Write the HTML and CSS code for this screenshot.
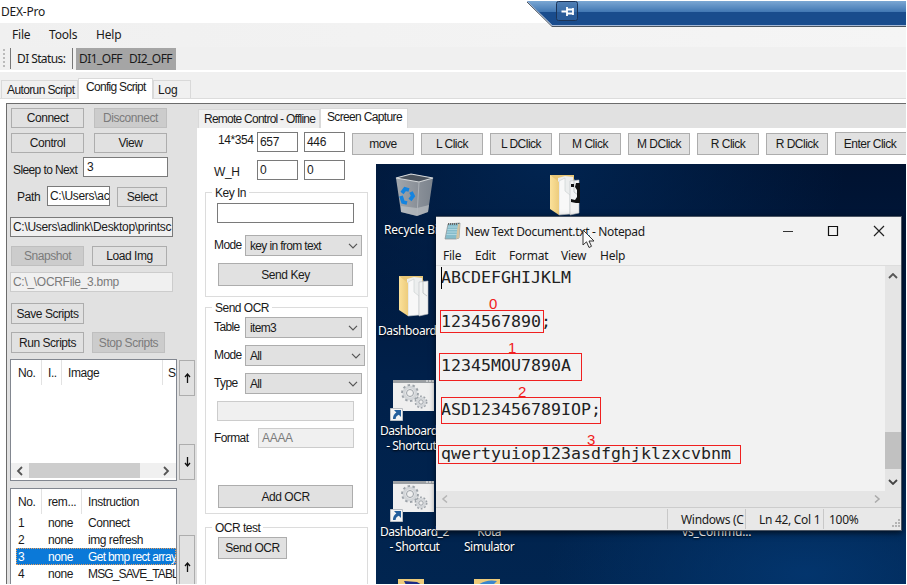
FILE: index.html
```html
<!DOCTYPE html>
<html lang="en">
<head>
<meta charset="utf-8">
<title>DEX-Pro</title>
<link rel="stylesheet" href="styles.css">
</head>
<body>
<svg class="defs" width="0" height="0">
  <defs>
    <linearGradient id="folderFill" x1="0" x2="1"><stop offset="0" stop-color="#fbe19a"/><stop offset="1" stop-color="#edcc7c"/></linearGradient>
    <linearGradient id="binFill" x1="0" x2="1"><stop offset="0" stop-color="#a2a7ad"/><stop offset=".55" stop-color="#8b9199"/><stop offset="1" stop-color="#7b838d"/></linearGradient>
    <symbol id="folder" viewBox="0 0 32 44">
      <path d="M1 2h24v32l-16 4-8-3z" fill="#e8c676"/>
      <path d="M9 5l7-2 8 1v34l-15 3z" fill="#eceeee"/>
      <path d="M10 8l6-3v13l5 4v19l-11 1z" fill="#f8f8f8" stroke="#c8cccc" stroke-width=".6"/>
      <path d="M21 8l9-1v33l-9 2z" fill="#f2f3f3" stroke="#bcc0c2" stroke-width=".6"/>
      <path d="M25 6v13l4 3" fill="none" stroke="#b7bbbd" stroke-width=".8"/>
      <path d="M1 2l9 7v33l-9-6z" fill="url(#folderFill)"/>
    </symbol>
    <symbol id="shortcut" viewBox="0 0 44 42">
      <path d="M3 1h41v31H3z" fill="#efefef"/>
      <path d="M3 1h41v3H3z" fill="#9ca0a4"/>
      <path d="M36 2h2M39 2h2M42 2h2" stroke="#f5f5f5"/>
      <g fill="none" stroke="#9ca2a8">
        <circle cx="20" cy="14" r="6" stroke-width="3" stroke="#d3d6d9"/>
        <circle cx="20" cy="14" r="8" stroke-width="1.800" stroke-dasharray="2.500 2.500"/>
        <circle cx="20" cy="14" r="3.500"/>
        <circle cx="31" cy="23" r="4" stroke-width="2.500" stroke="#d3d6d9"/>
        <circle cx="31" cy="23" r="5.700" stroke-width="1.500" stroke-dasharray="1.800 1.800"/>
        <circle cx="31" cy="23" r="2.200"/>
      </g>
      <path d="M.5 29.500h12v12H.5z" fill="#f4f4f4" stroke="#b9bdc2"/>
      <path d="M4 31h7v7l-2.200-2.200C7 36.500 5.800 38 5.600 40H3c-.3-3 1.500-5.500 3.400-6.600z" fill="#245f9c"/>
    </symbol>
    <symbol id="chev" viewBox="0 0 10 6"><path d="M1 .8l4 4 4-4" fill="none" stroke="currentColor" stroke-width="1.200"/></symbol>
    <symbol id="arrowUp" viewBox="0 0 7 10"><path d="M3.500 1v9M1 4l2.500-3L6 4" fill="none" stroke="#111" stroke-width="1.300"/></symbol>
  </defs>
</svg>

<div class="app">
  <header class="titlebar"><span>DEX-Pro</span></header>
  <div class="session-bar">
    <svg width="379" height="28" viewBox="0 0 379 28">
      <defs><linearGradient id="bar" x1="0" x2="0" y1="0" y2="1"><stop offset="0" stop-color="#7ba7d3"/><stop offset="1" stop-color="#4177b3"/></linearGradient></defs>
      <path d="M0 1h379v25H26z" fill="#194c8d"/>
      <path d="M0 1h379v11H11z" fill="url(#bar)"/>
      <path d="M0 1l25 24.500h354" fill="none" stroke="#a4b8d6"/>
      <path d="M0 2l25 24.500h354" fill="none" stroke="#4b5560"/>
      <rect x="29.500" y="1.500" width="21" height="19" rx="2" fill="#3565a0" fill-opacity=".6" stroke="#1c3457"/>
      <path d="M34.500 11.500h5M40 7v9M40 9.500h6M40 13.500h6M46 8v7" stroke="#fff" stroke-width="1.800" fill="none"/>
    </svg>
  </div>
  <nav class="menubar ui"><span>File</span><span>Tools</span><span>Help</span></nav>
  <div class="toolstrip ui">
    <i class="grip"></i><i class="sep"></i><span class="di-label">DI Status:</span><i class="sep"></i>
    <span class="di"><b>DI1_OFF</b><b>DI2_OFF</b></span>
  </div>
  <div class="tabs outer">
    <span class="tab t-auto">Autorun Script</span><span class="tab active t-config">Config Script</span><span class="tab t-log">Log</span>
  </div>
  <main class="page">
    <aside class="side">
      <div class="row r-connect"><button class="w73">Connect</button><button class="w73 off">Disconnect</button></div>
      <div class="row r-control"><button class="w73">Control</button><button class="w73">View</button></div>
      <div class="row r-sleep"><label>Sleep to Next</label><div class="field">3</div></div>
      <div class="row r-path"><label>Path</label><div class="field">C:\Users\ac</div><button>Select</button></div>
      <div class="field wide ro">C:\Users\adlink\Desktop\printsc</div>
      <div class="row r-snap"><button class="w73 off">Snapshot</button><button class="w75">Load Img</button></div>
      <div class="field wide dis">C:\_\OCRFile_3.bmp</div>
      <div class="row r-save"><button class="w73">Save Scripts</button></div>
      <div class="row r-run"><button class="w73">Run Scripts</button><button class="w73 off">Stop Scripts</button></div>
      <div class="row r-list1">
        <div class="list">
          <div class="head h1"><span>No.</span><span>I..</span><span>Image</span><span>S</span></div>
          <div class="hscroll"><svg width="7" height="10"><path d="M6 1L2 5l4 4" fill="none" stroke="#555" stroke-width="1.800"/></svg><i></i><svg width="7" height="10"><path d="M1 1l4 4-4 4" fill="none" stroke="#555" stroke-width="1.800"/></svg></div>
        </div>
        <div class="movers"><button><svg width="7" height="10"><use href="#arrowUp"/></svg></button><button><svg class="flip" width="7" height="10"><use href="#arrowUp"/></svg></button></div>
      </div>
      <div class="row r-list2">
        <div class="list">
          <div class="head h2"><span>No.</span><span>rem...</span><span>Instruction</span></div>
          <div class="item"><span>1</span><span>none</span><span>Connect</span></div>
          <div class="item"><span>2</span><span>none</span><span>img refresh</span></div>
          <div class="item sel"><span>3</span><span>none</span><span>Get bmp rect array</span></div>
          <div class="item"><span>4</span><span>none</span><span class="caps">MSG_SAVE_TABL</span></div>
        </div>
        <div class="movers"><button><svg width="7" height="10"><use href="#arrowUp"/></svg></button></div>
      </div>
    </aside>

    <section class="work">
      <div class="tabs inner"><span class="tab t-remote">Remote Control - Offline</span><span class="tab active t-capture">Screen Capture</span></div>
      <div class="capture">
        <div class="controls">
          <div class="row r-pos"><label>14*354</label><div class="field">657</div><div class="field">446</div></div>
          <div class="row r-wh"><label>W_H</label><div class="field">0</div><div class="field">0</div></div>
          <div class="group g-key">
            <h4>Key In</h4>
            <div class="field text"></div>
            <div class="row r-mode"><label>Mode</label><div class="select">key in from text<svg width="10" height="6"><use href="#chev"/></svg></div></div>
            <button>Send Key</button>
          </div>
          <div class="group g-ocr">
            <h4>Send OCR</h4>
            <div class="row"><label>Table</label><div class="select">item3<svg width="10" height="6"><use href="#chev"/></svg></div></div>
            <div class="row"><label>Mode</label><div class="select long">All<svg width="10" height="6"><use href="#chev"/></svg></div></div>
            <div class="row"><label>Type</label><div class="select">All<svg width="10" height="6"><use href="#chev"/></svg></div></div>
            <div class="field text dis"></div>
            <div class="row r-format"><label>Format</label><div class="field dis">AAAA</div></div>
            <button>Add OCR</button>
          </div>
          <div class="group g-test">
            <h4>OCR test</h4>
            <button>Send OCR</button>
          </div>
        </div>
        <div class="remote">
          <div class="actions"><button class="move">move</button><button>L Click</button><button>L DClick</button><button>M Click</button><button>M DClick</button><button>R Click</button><button>R DClick</button><button class="enter">Enter Click</button></div>
          <div class="desktop">
            <svg class="d-bin" width="40" height="44" viewBox="0 0 40 44">
              <path d="M1 5l15-4 22 4-5 34-11 4-16-4z" fill="url(#binFill)"/>
              <path d="M6 33l16 2 12-3-1 7-11 4-16-4z" fill="#c9ccce" opacity=".55"/>
              <path d="M1 5l15-4 22 4-14 4z" fill="#4b535d" stroke="#d5d8da" stroke-width="1.100"/>
              <path d="M24 9l-2 33" fill="none" stroke="#b4b9be" stroke-width=".8"/>
              <g fill="none" stroke="#1484e0" stroke-width="3.800"><path d="M7 20l3-4 4 1"/><path d="M16 19l2 4-3 4"/><path d="M6 23l2 6 4 1"/></g>
            </svg>
            <span class="d-label l-bin">Recycle Bin</span>
            <svg class="d-folder f1" width="32" height="44"><use href="#folder"/></svg>
            <svg class="d-folder f2" width="32" height="44"><use href="#folder"/><path d="M22 11h3v3h-3zM27 10h4v20h-4l-5-1v-3l4 1 2-3v-7l-2-3z" fill="#111"/></svg>
            <span class="d-label l-dash">Dashboard_</span>
            <svg class="d-short s1" width="44" height="42"><use href="#shortcut"/></svg>
            <span class="d-label l-s1">Dashboard_<br>- Shortcut</span>
            <svg class="d-short s2" width="44" height="42"><use href="#shortcut"/></svg>
            <span class="d-label l-s2">Dashboard_2<br>- Shortcut</span>
            <span class="d-label l-kota">Kota<br>Simulator</span>
            <span class="d-label l-vs">vs_Commu...</span>
            <svg class="d-tip p1" width="26" height="6"><path d="M0 0h26v6H0z" fill="#edcb7a"/><path d="M6 2l13 1 5 3H8z" fill="#1c2c86"/></svg>
            <svg class="d-tip p2" width="26" height="6"><path d="M0 0h26v6H0z" fill="#edcb7a"/><path d="M4 6q8-6 19-4l-4 4z" fill="#3b86cd"/></svg>

            <div class="notepad">
              <div class="np-title">
                <svg width="17" height="18" viewBox="0 0 17 18"><path d="M4 2l12-1-1 15-3 1H1z" fill="#85bccb" stroke="#8a8f92" stroke-width=".7"/><path d="M4 5h11M3.500 7.500h11M3 10h11M2.500 12.500h11" stroke="#b9dce4" stroke-width=".8"/><path d="M4 2h12" stroke="#666" stroke-dasharray="1 1" stroke-width="2"/><path d="M16 2l-1 14-3 1 2-15z" fill="#d4c3a0"/></svg>
                <span>New Text Document.txt - Notepad</span>
                <svg class="np-win" width="104" height="14" viewBox="0 0 104 14"><path d="M1 7.500h10" stroke="#333"/><path d="M46.500 2.500h9v9h-9z" fill="none" stroke="#111" stroke-width="1.200"/><path d="M92 2l10 10M102 2L92 12" stroke="#222" stroke-width="1.200"/></svg>
              </div>
              <div class="np-menu"><span>File</span><span>Edit</span><span>Format</span><span>View</span><span>Help</span></div>
              <div class="np-body">
                <div class="np-text"><p>ABCDEFGHIJKLM</p><p>1234567890;</p><p>12345MOU7890A</p><p>ASD123456789IOP;</p><p>qwertyuiop123asdfghjklzxcvbnm</p></div>
                <div class="np-vs"><svg width="10" height="6"><path d="M1 5l4-4 4 4" fill="none" stroke="#555" stroke-width="1.800"/></svg><i></i><svg width="10" height="6"><path d="M1 1l4 4 4-4" fill="none" stroke="#444" stroke-width="1.800"/></svg></div>
              </div>
              <div class="np-hs"><svg width="7" height="8"><path d="M6 .5L2 4l4 3.500" fill="none" stroke="#b5b5b5" stroke-width="1.500"/></svg><svg width="7" height="8"><path d="M1 .5L5 4 1 7.500" fill="none" stroke="#aaa" stroke-width="1.500"/></svg></div>
              <div class="np-status"><span class="st1">Windows (C</span><span class="st2">Ln 42, Col 1</span><span class="st3">100%</span><svg width="9" height="9"><path d="M6 1h2M3 4h2M6 4h2M0 7h2M3 7h2M6 7h2" stroke="#b4b4b4" stroke-width="2"/></svg></div>
              <i class="caret"></i>
              <i class="box b0"></i><i class="box b1"></i><i class="box b2"></i><i class="box b3"></i>
              <b class="num n0">0</b><b class="num n1">1</b><b class="num n2">2</b><b class="num n3">3</b>
              <svg class="cursor" width="13" height="20" viewBox="0 0 13 20"><path d="M1 1v15l3.500-3.200L7 18.500l2.500-1.200L7 12h5z" fill="#fbfbfb" stroke="#333"/></svg>
            </div>
          </div>
        </div>
      </div>
    </section>
  </main>
</div>
</body>
</html>
```
FILE: styles.css
```css
* { box-sizing: border-box; }
body { margin: 0; background: #fff; font: 12px/16px "Liberation Sans", sans-serif; letter-spacing: -.55px; color: #1a1a1a; }
.defs { position: absolute; }
svg { display: block; flex: none; }
i, b { font-style: normal; font-weight: normal; }
.app { position: relative; width: 906px; height: 584px; overflow: hidden; display: flex; flex-direction: column; white-space: nowrap; }
button { font: inherit; letter-spacing: -.45px; color: inherit; padding: 0; margin: 0; border: 1px solid #adadad; background: #e1e1e1; display: flex; align-items: center; justify-content: center; flex: none; overflow: hidden; }
button.off { background: #ccc; border-color: #bfbfbf; color: #7b7b7b; }
.row { display: flex; flex: none; }
.field { background: #fff; border: 1px solid #7a7a7a; height: 20px; line-height: 18px; padding-left: 3px; overflow: hidden; flex: none; letter-spacing: -.3px; }
.field.ro { background: #f0f0f0; }
.field.dis { background: #f0f0f0; border-color: #ccc; color: #7b7b7b; }

.titlebar { height: 23px; padding: 4px 0 0 1px; font: 12px/16px "Noto Sans", sans-serif; flex: none; letter-spacing: -.2px; }
.session-bar { position: absolute; left: 527px; top: 0; }
.ui { font: 12px/16px "Noto Sans", sans-serif; }
.menubar { height: 24px; background: linear-gradient(90deg, #f0f0f0, #f5f5f5); padding: 4px 0 0 12px; display: flex; flex: none; letter-spacing: -.2px; }
.menubar span:nth-child(1) { width: 37px; }
.menubar span:nth-child(2) { width: 47px; }
.toolstrip { height: 25px; background: #f0f0f0; border-bottom: 2px solid #fff; display: flex; align-items: flex-start; padding: 1px 0 0 3px; flex: none; }
.grip { width: 2px; height: 18px; margin-top: 1px; background: repeating-linear-gradient(#bbb 0 2px, transparent 2px 4px); }
.sep { width: 1px; height: 21px; background: #777; margin-left: 5px; }
.di-label { width: 57px; padding: 3px 0 0 6px; letter-spacing: -.6px; }
.di-label + .sep { margin-left: 4px; }
.di { margin-left: 3px; width: 100px; height: 22px; background: #a5a5a5; padding: 3px 0 0 3px; display: flex; gap: 7px; letter-spacing: -.55px; }

.tabs { display: flex; align-items: flex-end; flex: none; }
.tab { border: 1px solid #d9d9d9; border-bottom: 0; background: #f0f0f0; height: 18px; line-height: 18px; padding-left: 5px; }
.tab.active { background: #fff; line-height: 17px; }
.outer { height: 27px; background: #f0f0f0; border-bottom: 1px solid #dcdcdc; padding-left: 1px; }
.t-auto { width: 77px; letter-spacing: -.62px; }
.t-config { width: 75px; padding-left: 7px; margin-bottom: -1px; letter-spacing: -.7px; }
.outer .active { height: 21px; }
.t-log { width: 38px; padding-left: 4px; letter-spacing: -.2px; }
.page { margin: 4px 0 0 6px; flex: 1; border: solid #6c6c6c; border-width: 1px 0 0 1px; background: #e1e1e1; display: flex; min-height: 0; }

.side { width: 190px; padding: 4px 0 0 3px; flex: none; display: flex; flex-direction: column; align-items: flex-start; }
.w73 { width: 73px; } .w75 { width: 75px; }
.r-connect, .r-control { gap: 10px; margin: 0 0 5px 1px; height: 20px; }
.r-sleep { margin: -1px 0 0 3px; height: 20px; }
.r-sleep label { width: 70px; padding-top: 5px; letter-spacing: -.6px; }
.r-sleep .field { width: 85px; }
.r-path { margin: 9px 0 0 7px; height: 21px; align-items: flex-start; }
.r-path label { width: 30px; padding-top: 3px; letter-spacing: -.3px; }
.r-path .field { width: 63px; padding-left: 2px; }
.r-path button { width: 50px; height: 20px; margin: 1px 0 0 7px; }
.wide { width: 163px; margin-top: 10px; padding-left: 2px; }
.r-snap { margin: 9px 0 -4px 1px; gap: 8px; height: 20px; }
.r-save { margin: 11px 0 0 1px; height: 21px; }
.r-run { margin: 8px 0 0 1px; gap: 8px; height: 21px; }
.r-list1 { margin-top: 6px; gap: 2px; height: 122px; }
.list { width: 167px; background: #fff; border: 1px solid #828790; overflow: hidden; display: flex; flex-direction: column; }
.movers { display: flex; flex-direction: column; justify-content: space-between; padding: 1px 0; }
.movers button { width: 16px; height: 36px; }
.flip { transform: rotate(180deg); }
.head { display: flex; height: 25px; line-height: 26px; flex: none; letter-spacing: -.4px; }
.head span { border-left: 1px solid #e2e2e2; padding-left: 6px; }
.head span:first-child { border: 0; padding-left: 7px; width: 30px; }
.h1 span:nth-child(2) { width: 20px; } .h1 span:nth-child(3) { width: 101px; } .h1 span:nth-child(4) { padding-left: 5px; }
.hscroll { margin: auto 0 2px; height: 15px; background: #f0f0f0; display: flex; align-items: center; padding: 0 6px 0 5px; }
.hscroll i { width: 111px; height: 15px; background: #cdcdcd; margin-left: 6px; margin-right: auto; }
.r-list2 { margin-top: 7px; height: 110px; }
.r-list2 .list { width: 167px; }
.r-list2 .movers { padding: 47px 0 0 2px; justify-content: flex-start; }
.r-list2 .movers button { height: 63px; }
.h2 span:nth-child(2) { width: 40px; }
.item { display: flex; height: 17px; line-height: 18px; margin-left: 5px; padding-left: 2px; flex: none; letter-spacing: -.45px; }
.item span { flex: none; }
.item span:nth-child(1) { width: 30px; } .item span:nth-child(2) { width: 40px; }
.item .caps { letter-spacing: -.85px; }
.item.sel { background: #0b79d8; color: #fff; outline: 1px dotted #e8a060; outline-offset: -1px; }
.item.sel span:nth-child(3) { letter-spacing: -.65px; }

.work { flex: 1; min-width: 0; display: flex; flex-direction: column; padding-top: 4px; }
.inner { height: 20px; padding-left: 1px; }
.t-remote { width: 122px; letter-spacing: -.75px; }
.t-capture { width: 88px; padding-left: 6px; letter-spacing: -.65px; }
.inner .tab { height: 19px; } .inner .active { height: 20px; }
.capture { flex: 1; min-height: 0; background: #fff; display: flex; }
.controls { width: 179px; flex: none; padding: 4px 0 0 8px; }
.r-pos .field, .r-wh .field { width: 41px; margin-right: 6px; padding-left: 2px; }
.r-pos label { width: 52px; padding-left: 13px; letter-spacing: -.4px; }
.r-wh { margin-top: 8px; }
.r-wh label { width: 52px; padding: 4px 0 0 9px; letter-spacing: -.4px; }
.group { width: 163px; border: 1px solid #dcdcdc; margin-top: 12px; padding-left: 11px; }
.group h4 { font: inherit; width: max-content; margin: -8px 0 0 -5px; padding: 0 3px; background: #fff; height: 16px; letter-spacing: -.5px; }
.group button { width: 135px; height: 23px; margin-left: 1px; }
.text { width: 137px; margin-top: 2px; }
.group label { width: 31px; margin-left: -3px; padding-top: 2px; letter-spacing: -.6px; }
.select { width: 117px; height: 21px; border: 1px solid #adadad; background: #e1e1e1; padding: 0 3px 0 4px; display: flex; align-items: center; justify-content: space-between; color: #1a1a1a; letter-spacing: -.65px; }
.select svg { color: #555; }
.long { width: 120px; }
.g-key { height: 105px; }
.r-mode { margin: 12px 0 7px; }
.g-ocr { height: 207px; margin-top: 10px; }
.g-ocr .row { margin-bottom: 7px; height: 21px; }
.g-ocr h4 + .row { margin-top: 1px; }
.g-ocr .text { margin: 7px 0; }
.g-ocr .r-format { margin-bottom: 36px; }
.group .r-format label { width: 44px; }
.r-format .field { width: 96px; }
.g-test { height: 80px; margin-top: 13px; }
.g-test button { width: 69px; height: 22px; margin-top: 1px; }
.remote { flex: 1; min-width: 0; display: flex; flex-direction: column; }
.actions { height: 36px; margin-left: -24px; padding-top: 5px; display: flex; gap: 7px; flex: none; }
.actions button { width: 62px; height: 22px; letter-spacing: -.5px; }
.actions .move { letter-spacing: -.4px; }
.actions .enter { width: 73px; height: 23px; margin-top: -1px; padding-right: 3px; }

.desktop { position: relative; flex: 1; overflow: hidden; background: radial-gradient(ellipse 260px 120px at 430px 410px, #03356d, transparent), radial-gradient(ellipse 300px 200px at 170px 0, #012450, transparent), linear-gradient(#001230, #00204a 50%, #012550); font: 12px/15px "Noto Sans", sans-serif; }
.desktop > * { position: absolute; }
.d-bin { left: 19px; top: 9px; }
.d-label { color: #fff; text-align: center; text-shadow: 0 1px 2px #000; letter-spacing: -.5px; }
.l-bin { left: 8px; top: 58px; letter-spacing: -.2px; }
.f1 { left: 22px; top: 110px; } .f2 { left: 173px; top: 9px; }
.l-dash { left: 2px; top: 159px; letter-spacing: -.4px; }
.s1 { left: 14px; top: 215px; } .s2 { left: 14px; top: 316px; }
.l-s1 { left: 4px; top: 259px; } .l-s2 { left: 4px; top: 360px; }
.l-kota { left: 88px; top: 360px; }
.l-vs { left: 306px; top: 360px; letter-spacing: -.2px; }
.p1 { left: 22px; top: 415px; } .p2 { left: 98px; top: 415px; }

.notepad { left: 60px; top: 52px; width: 466px; height: 315px; background: #f2f2f2; border: 1px solid #4b5563; border-left: 0; display: flex; flex-direction: column; box-shadow: 0 2px 6px #000a; }
.np-title { height: 28px; display: flex; align-items: center; padding: 0 15px 0 8px; }
.np-title span { margin-left: 4px; letter-spacing: -.35px; }
.np-win { margin-left: auto; }
.np-menu { height: 21px; padding: 4px 0 0 7px; display: flex; border-bottom: 1px solid #ddd; line-height: 14px; letter-spacing: -.25px; }
.np-menu span:nth-child(1) { width: 32px; } .np-menu span:nth-child(2) { width: 34px; } .np-menu span:nth-child(3) { width: 52px; } .np-menu span:nth-child(4) { width: 39px; }
.np-body { height: 225px; display: flex; }
.np-text { width: 450px; padding: 1px 0 0 5px; }
.np-text p { margin: 0 0 22px; font: 16.610px/22px "DejaVu Sans Mono", monospace; letter-spacing: 0; color: #222; }
.np-vs { width: 16px; background: #e5e5e5; display: flex; flex-direction: column; align-items: center; padding-top: 7px; }
.np-vs i { width: 16px; height: 37px; background: #c1c1c1; margin: auto 0 10px; }
.np-vs svg:last-child { margin-bottom: 6px; }
.np-hs { height: 17px; background: #e5e5e5; display: flex; align-items: center; justify-content: space-between; padding: 0 20px 0 5px; border-bottom: 1px solid #ccc; }
.np-status { flex: 1; background: #e8e8e8; display: flex; align-items: center; }
.np-status span { border-left: 1px solid #c8c8c8; height: 20px; line-height: 21px; overflow: hidden; letter-spacing: -.3px; }
.st1 { margin-left: 231px; width: 78px; padding-left: 13px; }
.st2 { width: 78px; padding-left: 13px; }
.st3 { width: 66px; padding-left: 5px; }
.np-status svg { margin: 8px 0 0 auto; }
.caret, .box, .num, .cursor { position: absolute; }
.caret { left: 5px; top: 50px; width: 1px; height: 22px; background: #000; }
.box { border: 1px solid #f02020; }
.b0 { left: 4px; top: 93px; width: 104px; height: 23px; }
.b1 { left: 3px; top: 136px; width: 143px; height: 28px; }
.b2 { left: 5px; top: 180px; width: 160px; height: 27px; }
.b3 { left: 2px; top: 228px; width: 303px; height: 19px; }
.num { color: #f02020; font: 15px/16px "Liberation Sans", sans-serif; }
.n0 { left: 53px; top: 79px; } .n1 { left: 72px; top: 123px; } .n2 { left: 82px; top: 167px; } .n3 { left: 151px; top: 215px; }
.cursor { left: 146px; top: 12px; }
```
